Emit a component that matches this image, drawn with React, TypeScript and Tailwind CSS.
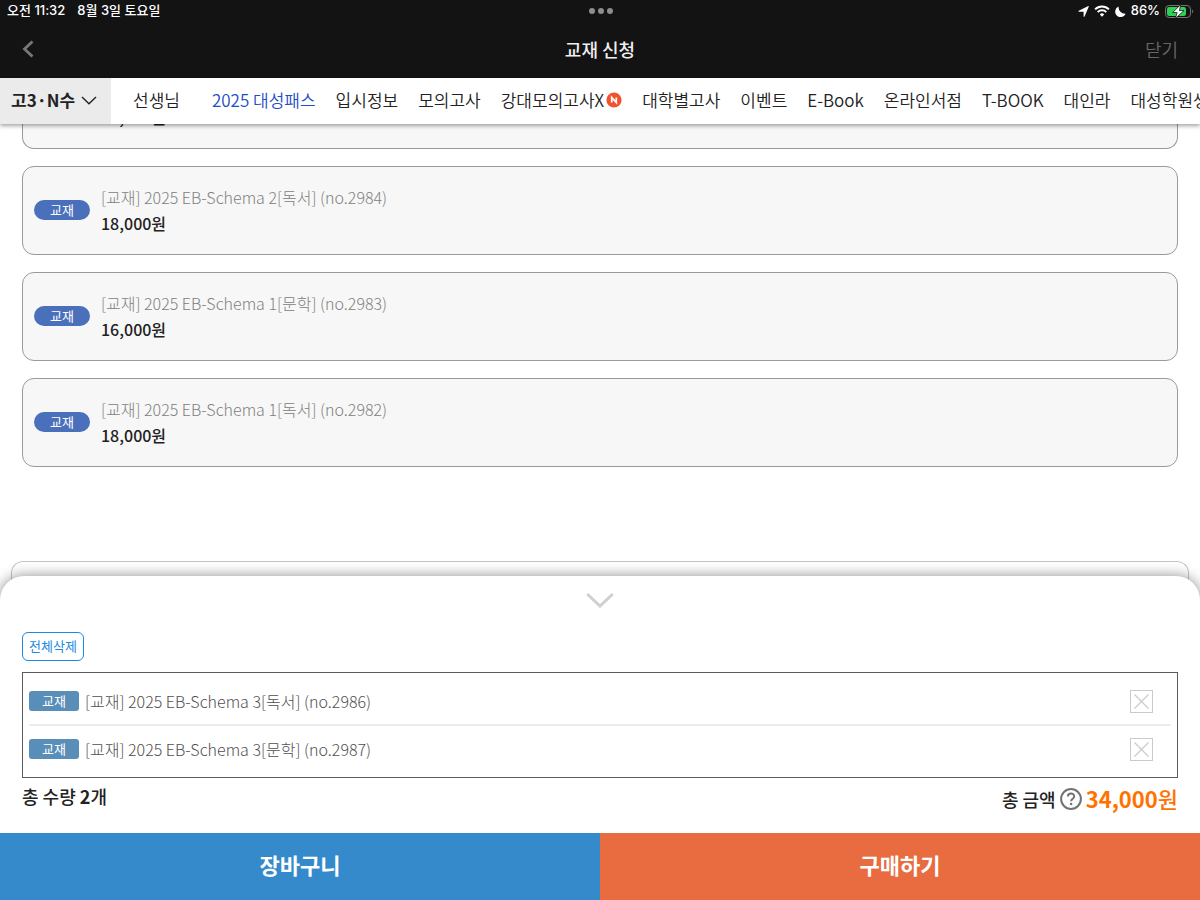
import { Fragment } from "react";

type Book = { title: string; price: string };

const books: Book[] = [
  { title: "[교재] 2025 EB-Schema 2[독서] (no.2984)", price: "18,000원" },
  { title: "[교재] 2025 EB-Schema 1[문학] (no.2983)", price: "16,000원" },
  { title: "[교재] 2025 EB-Schema 1[독서] (no.2982)", price: "18,000원" },
];

const selected = [
  "[교재] 2025 EB-Schema 3[독서] (no.2986)",
  "[교재] 2025 EB-Schema 3[문학] (no.2987)",
];

const menu = [
  { label: "2025 대성패스", active: true },
  { label: "입시정보" },
  { label: "모의고사" },
  { label: "강대모의고사X", isNew: true },
  { label: "대학별고사" },
  { label: "이벤트" },
  { label: "E-Book" },
  { label: "온라인서점" },
  { label: "T-BOOK" },
  { label: "대인라" },
  { label: "대성학원생" },
];

function StatusBar() {
  return (
    <div className="flex h-[22px] items-center justify-between pr-[6px] pl-[7px] font-['Inter','Noto_Sans_CJK_KR',sans-serif] text-[13px] font-medium text-white">
      <div className="flex flex-1 gap-3">
        <span>오전 11:32</span>
        <span>8월 3일 토요일</span>
      </div>
      <div className="flex gap-[3px]">
        <span className="size-[6px] rounded-full bg-[#8e8e8e]" />
        <span className="size-[6px] rounded-full bg-[#8e8e8e]" />
        <span className="size-[6px] rounded-full bg-[#8e8e8e]" />
      </div>
      <div className="flex flex-1 items-center justify-end gap-[5px]">
        <svg className="h-[11px] w-[11px]" viewBox="0 0 11 11" fill="#fff">
          <path d="M10.8.6 6.6 10.5c-.2.5-1 .4-1-.2V5.8L1 5.7c-.7 0-.8-.8-.2-1L10.3.1c.4-.1.6.2.5.5z" />
        </svg>
        <svg className="h-3 w-4" viewBox="0 0 16 12" fill="none" stroke="#fff" strokeWidth="2">
          <path d="M1.1 4.4a9.8 9.8 0 0 1 13.8 0" />
          <path d="M3.7 7.1a6.1 6.1 0 0 1 8.6 0" />
          <path d="M8 11.7 5.8 9.4a3.2 3.2 0 0 1 4.4 0z" fill="#fff" stroke="none" />
        </svg>
        <svg className="h-[11px] w-[11px]" viewBox="0 0 11 11" fill="#fff">
          <path d="M3.6.5A5.5 5.5 0 1 0 10.7 7.8 6.6 6.6 0 0 1 3.6.5z" />
        </svg>
        <span>86%</span>
        <svg className="h-[15px] w-[29px]" viewBox="0 0 29 15">
          <rect x=".5" y="1.5" width="25" height="12" rx="3.6" fill="none" stroke="#777" />
          <path d="M27.2 5.6v3.8c1.4-.5 1.4-3.3 0-3.8z" fill="#777" />
          <rect x="2" y="3" width="19" height="9" rx="2.2" fill="#30d158" />
          <path d="M15.8.5 7.6 8.6h4.5L10.4 14.6l8.6-8h-4.6z" fill="#fff" stroke="#131313" strokeWidth=".8" />
        </svg>
      </div>
    </div>
  );
}

function Menu() {
  return (
    <nav className="relative z-10 flex h-[46px] shrink-0 items-stretch bg-white text-[17px] text-[#222] shadow-[0_2px_4px_rgba(0,0,0,0.35)]">
      <button className="flex w-[111px] shrink-0 items-center gap-[6px] bg-[#ebebeb] pb-[2px] pl-[11px] font-bold">
        <span className="whitespace-nowrap">고3·N수</span>
        <svg className="h-[9px] w-4" viewBox="0 0 16 9" fill="none" stroke="#222" strokeWidth="1.4">
          <path d="M1 1l7 6.8L15 1" />
        </svg>
      </button>
      <div className="flex min-w-0 flex-1 items-center gap-8 overflow-hidden pb-[2px] pl-[22px] font-[350] whitespace-nowrap">
        <a href="#teachers">선생님</a>
        <div className="flex items-center gap-5">
          {menu.map((item) => (
            <a key={item.label} href="#menu" className={item.active ? "text-[#1d4fc4]" : "flex items-center gap-[2px]"}>
              {item.label}
              {item.isNew && (
                <svg className="size-4" viewBox="0 0 16 16">
                  <circle cx="8" cy="8" r="7.6" fill="#f1512c" />
                  <path d="M5.7 10.6V5.4l4.6 5.2V5.4" fill="none" stroke="#fff" strokeWidth="1.7" />
                </svg>
              )}
            </a>
          ))}
        </div>
      </div>
    </nav>
  );
}

function BookCard({ title, price }: Book) {
  return (
    <li className="flex shrink-0 items-center gap-[11px] rounded-[12px] border border-[#9a9a9a] bg-[#f7f7f7] px-[11px] pt-[17px] pb-[18px]">
      <span className="flex h-5 w-14 items-center justify-center rounded-full bg-[#4a6fbb] text-[13px] text-white">교재</span>
      <div className="text-[16px] leading-[26px]">
        <p className="font-light text-[#808080]">{title}</p>
        <p className="font-medium text-[#222]">{price}</p>
      </div>
    </li>
  );
}

function Sheet() {
  return (
    <section className="relative z-10 -mt-10 shrink-0 rounded-t-[24px] bg-white shadow-[0_0_14px_rgba(0,0,0,0.45)]">
      <div className="px-[22px] pt-4">
        <button aria-label="접기" className="mx-auto block">
          <svg className="h-4 w-7" viewBox="0 0 28 16" fill="none" stroke="#d0d0d0" strokeWidth="3">
            <path d="M1.2 2 14 14 26.8 2" />
          </svg>
        </button>
        <button className="mt-6 block h-[29px] rounded-[6px] border border-[#1a8ae2] px-[6px] pb-[2px] text-[13px] text-[#1a8ae2]">전체삭제</button>
        <ul className="mt-[11px] border border-[#5c5c5f] px-[6px] py-[5px]">
          {selected.map((title, i) => (
            <Fragment key={title}>
              {i > 0 && <li aria-hidden="true" className="h-[2px] bg-[#ececec]" />}
              <li className="flex h-[46px] items-center gap-[6px] text-[16px] font-light text-[#505050]">
                <span className="flex h-5 w-[50px] items-center justify-center rounded-[3px] bg-[#598eb9] text-[13px] font-normal text-white">교재</span>
                <span className="flex-1">{title}</span>
                <button aria-label="삭제" className="mr-[18px]">
                  <svg className="size-[23px]" viewBox="0 0 23 23" fill="none" stroke="#cacaca">
                    <rect x=".5" y=".5" width="22" height="22" />
                    <path d="M4.5 4.5l14 14M18.5 4.5l-14 14" strokeWidth="1.2" />
                  </svg>
                </button>
              </li>
            </Fragment>
          ))}
        </ul>
        <div className="flex h-[55px] items-start justify-between pt-1 text-[18px] leading-7 font-medium text-[#222]">
          <p>
            총 수량 <b>2</b>개
          </p>
          <div className="flex items-center gap-1">
            <p className="flex items-center gap-1 pt-[3px]">
              총 금액
              <svg className="size-[22px]" viewBox="0 0 22 22" fill="none" stroke="#737373">
                <circle cx="11" cy="11" r="9.9" strokeWidth="2" />
                <path d="M7.9 8.6c0-4 6.3-4 6.3-.2 0 2.4-3.1 2.3-3.1 4.9" strokeWidth="2" />
                <circle cx="11.1" cy="16" r="1.3" fill="#737373" stroke="none" />
              </svg>
            </p>
            <p className="text-[22px] text-[#ff7200]">
              <b>34,000</b>원
            </p>
          </div>
        </div>
      </div>
      <div className="grid h-[67px] grid-cols-2 text-[22px] font-bold text-white">
        <button className="bg-[#358acb] pb-1">장바구니</button>
        <button className="bg-[#e86c3f] pb-1">구매하기</button>
      </div>
    </section>
  );
}

export default function App() {
  return (
    <div className="flex h-screen flex-col overflow-hidden bg-white font-['Noto_Sans_CJK_KR',sans-serif]">
      <header className="shrink-0 bg-[#131313]">
        <StatusBar />
        <div className="grid h-14 grid-cols-3 items-center px-[22px] pb-[2px] text-[18px]">
          <button aria-label="뒤로" className="justify-self-start">
            <svg className="h-[18px] w-3" viewBox="0 0 12 18" fill="none" stroke="#777" strokeWidth="2.8">
              <path d="M10.5 1.5 2.5 9l8 7.5" />
            </svg>
          </button>
          <h1 className="text-center font-medium text-[#eee]">교재 신청</h1>
          <button className="justify-self-end font-[350] text-[#666]">닫기</button>
        </div>
      </header>
      <Menu />
      <main className="flex min-h-0 flex-1 flex-col justify-end overflow-hidden">
        <ul className="flex flex-col gap-[17px] px-[22px]">
          <li className="rounded-b-[12px] border border-t-0 border-[#9a9a9a] bg-[#f7f7f7] pb-[18px] pl-[78px] text-[16px] leading-[26px] font-medium text-[#222]">
            16,000원
          </li>
          {books.map((book) => (
            <BookCard key={book.title} {...book} />
          ))}
        </ul>
        <div className="mx-[11px] mt-[94px] h-[55px] shrink-0 rounded-t-[12px] border border-b-0 border-[#c4c4c4]" />
      </main>
      <Sheet />
    </div>
  );
}
